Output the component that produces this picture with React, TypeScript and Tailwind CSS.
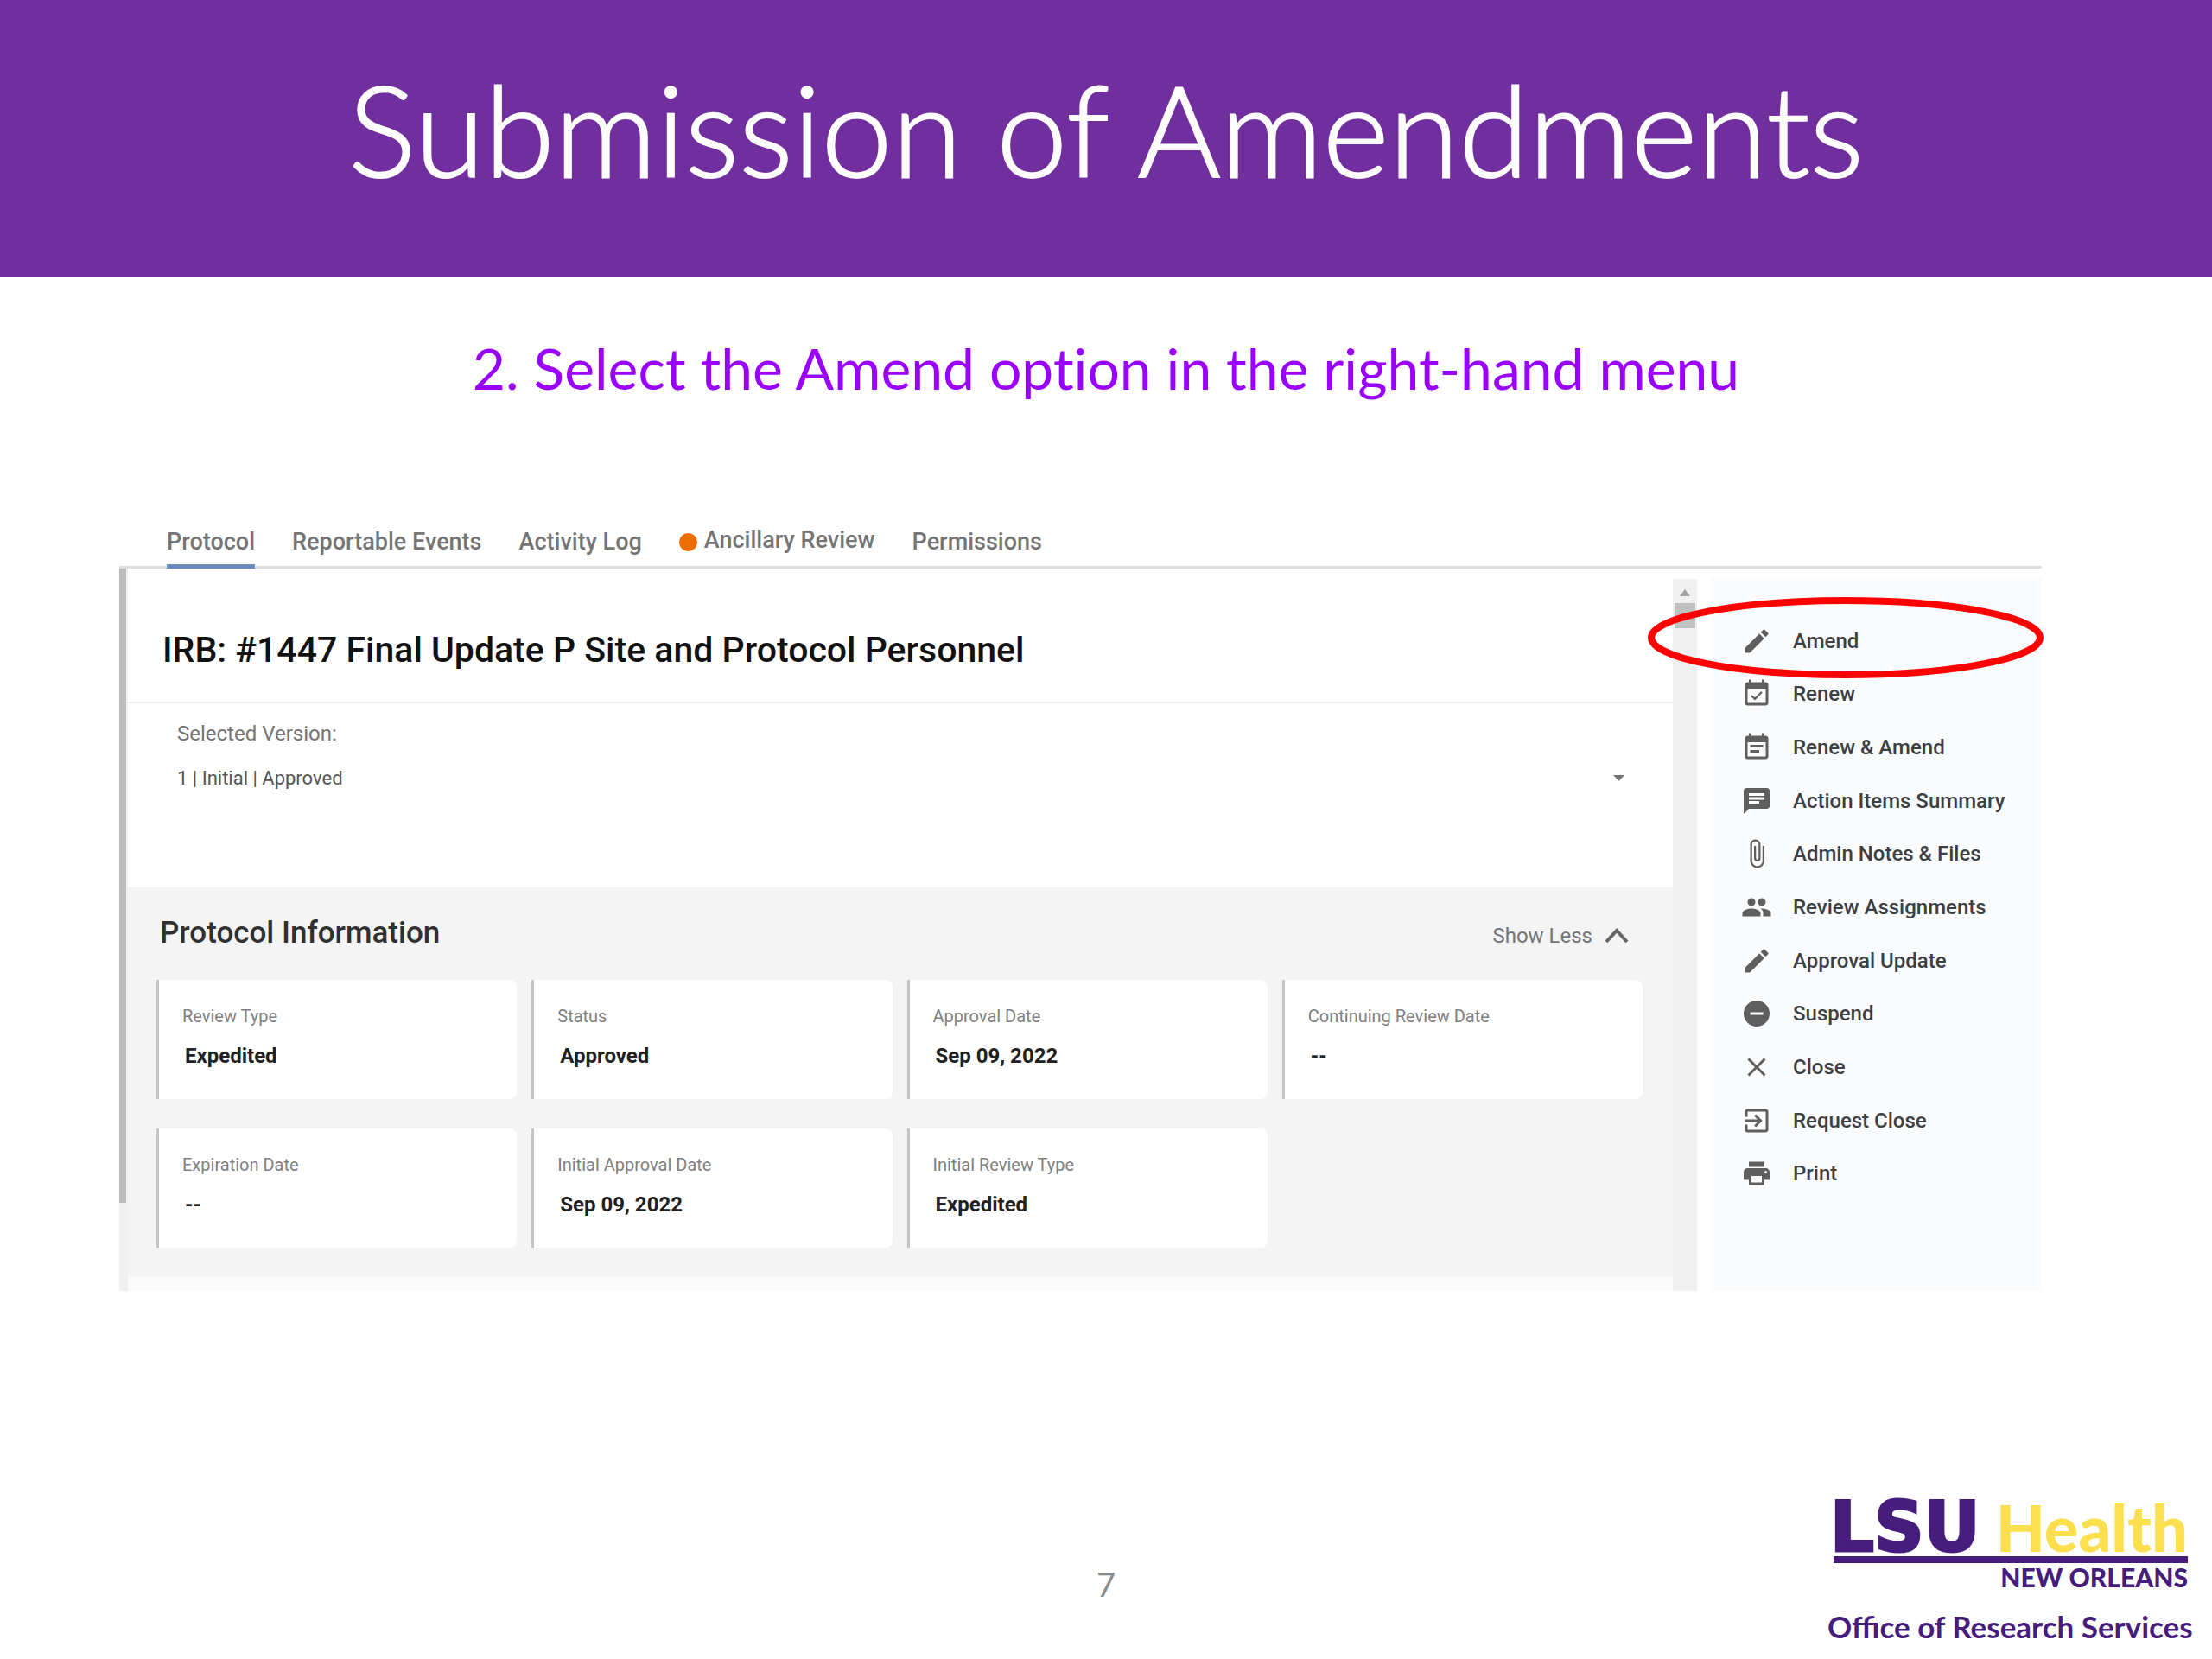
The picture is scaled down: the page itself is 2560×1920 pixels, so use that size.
import { useState } from 'react';
import type { IconType } from 'react-icons';
import {
  MdAttachFile,
  MdChat,
  MdClose,
  MdEdit,
  MdEventAvailable,
  MdEventNote,
  MdExitToApp,
  MdPeople,
  MdPrint,
  MdRemoveCircle,
} from 'react-icons/md';

interface Tab {
  label: string;
  alert?: boolean;
}

interface MenuItem {
  label: string;
  icon: IconType;
  circled?: boolean;
}

interface Field {
  label: string;
  value: string;
}

const TABS: Tab[] = [
  { label: 'Protocol' },
  { label: 'Reportable Events' },
  { label: 'Activity Log' },
  { label: 'Ancillary Review', alert: true },
  { label: 'Permissions' },
];

const MENU: MenuItem[] = [
  { label: 'Amend', icon: MdEdit, circled: true },
  { label: 'Renew', icon: MdEventAvailable },
  { label: 'Renew & Amend', icon: MdEventNote },
  { label: 'Action Items Summary', icon: MdChat },
  { label: 'Admin Notes & Files', icon: MdAttachFile },
  { label: 'Review Assignments', icon: MdPeople },
  { label: 'Approval Update', icon: MdEdit },
  { label: 'Suspend', icon: MdRemoveCircle },
  { label: 'Close', icon: MdClose },
  { label: 'Request Close', icon: MdExitToApp },
  { label: 'Print', icon: MdPrint },
];

const FIELDS: Field[] = [
  { label: 'Review Type', value: 'Expedited' },
  { label: 'Status', value: 'Approved' },
  { label: 'Approval Date', value: 'Sep 09, 2022' },
  { label: 'Continuing Review Date', value: '--' },
  { label: 'Expiration Date', value: '--' },
  { label: 'Initial Approval Date', value: 'Sep 09, 2022' },
  { label: 'Initial Review Type', value: 'Expedited' },
];

function TabBar({ active, onSelect }: { active: string; onSelect: (label: string) => void }) {
  return (
    <nav className="flex gap-[43px] border-b-3 border-[#dedede] pl-[55px]">
      {TABS.map((t) => (
        <button
          key={t.label}
          onClick={() => onSelect(t.label)}
          className={`-mb-[3px] flex h-14 items-center gap-2 border-b-5 text-[27px] font-medium text-[#757575] ${
            t.label === active ? 'border-[#6a89bd]' : 'border-transparent'
          }`}
        >
          {t.alert && <span className="h-[21px] w-[21px] rounded-full bg-[#ef6c00]" />}
          <span className={t.alert ? 'pb-1' : ''}>{t.label}</span>
        </button>
      ))}
    </nav>
  );
}

function FieldCard({ label, value }: Field) {
  return (
    <div className="h-[138px] rounded-r-lg border-l-3 border-[#c4c4c4] bg-white pt-[26px] pl-[27px]">
      <dt className="text-xl leading-8 text-[#808080]">{label}</dt>
      <dd className="pt-3 pl-[3px] text-2xl leading-9 font-bold text-[#212121]">{value}</dd>
    </div>
  );
}

function ProtocolInfo() {
  const [expanded, setExpanded] = useState(true);

  return (
    <section className="flex-1 bg-[#f4f4f4] pr-[35px] pb-[33px] pl-[33px]">
      <div className="flex h-[107px] items-center justify-between pr-4 pl-1">
        <h3 className="text-[35px] font-medium text-[#303030]">Protocol Information</h3>
        <button
          onClick={() => setExpanded(!expanded)}
          className="flex items-center gap-[14px] pt-1 text-2xl text-[#757575]"
        >
          {expanded ? 'Show Less' : 'Show More'}
          <svg width="28" height="18" viewBox="0 0 28 18" fill="none" stroke="#666666" strokeWidth="4">
            <path d={expanded ? 'M2 16 14 3 26 16' : 'M2 2 14 15 26 2'} />
          </svg>
        </button>
      </div>
      {expanded && (
        <dl className="grid grid-cols-4 gap-x-[17px] gap-y-[34px]">
          {FIELDS.map((f) => (
            <FieldCard key={f.label} {...f} />
          ))}
        </dl>
      )}
    </section>
  );
}

function ActionMenu() {
  return (
    <div className="ml-4 w-[383px] shrink-0 bg-[#fafbfd] pt-[42px] pl-[35px]">
      <ul className="grid h-[678px] auto-rows-fr">
        {MENU.map(({ label, icon: Icon, circled }) => (
          <li key={label} className="relative flex">
            <button className="flex items-center gap-6 text-2xl font-medium whitespace-nowrap text-[#3c4043]">
              <Icon size={36} className="text-[#5f5f5f]" />
              {label}
            </button>
            {circled && (
              <svg
                className="pointer-events-none absolute -top-5 -left-[108px]"
                width="458"
                height="96"
                viewBox="0 0 458 96"
                fill="none"
              >
                <ellipse cx="229" cy="47" rx="225" ry="43" stroke="#ff0000" strokeWidth="8" />
              </svg>
            )}
          </li>
        ))}
      </ul>
    </div>
  );
}

function Logo() {
  return (
    <div className="w-[421px] font-[Lato,sans-serif] text-[#461d7c]">
      <div className="mr-1 ml-[7px] flex items-end justify-between border-b-8 border-[#461d7c] pb-[3px]">
        <span className="-ml-1 font-['DejaVu_Sans',sans-serif] text-[80px] leading-[60px] font-bold [-webkit-text-stroke:3px_#461d7c]">
          LSU
        </span>
        <span className="text-[74px] leading-[60px] font-black text-[#fbdf4e]">Health</span>
      </div>
      <div className="mr-1 pt-px text-right text-[30px] leading-[30px] font-black">NEW ORLEANS</div>
      <div className="pt-[22px] text-[35px] leading-10 font-bold whitespace-nowrap">
        Office of Research Services
      </div>
    </div>
  );
}

export default function App() {
  const [tab, setTab] = useState('Protocol');

  return (
    <div className="flex min-h-screen flex-col bg-white font-[Roboto,sans-serif]">
      <header className="flex h-80 items-center justify-center bg-[#702e9f] pb-6">
        <h1 className="font-[Lato,sans-serif] text-[147px] leading-none font-light text-white [-webkit-text-stroke:2px_white]">
          Submission of Amendments
        </h1>
      </header>

      <h2 className="pt-16 text-center font-[Lato,sans-serif] text-[66px] leading-[84px] text-[#9900ff] [font-variant-ligatures:none]">
        2. Select the Amend option in the right-hand menu
      </h2>

      <main className="mt-[134px] mr-[197px] ml-[138px]">
        <TabBar active={tab} onSelect={setTab} />

        <div className="flex h-[836px]">
          <div className="w-[10px] bg-[#f0f0f0]">
            <div className="h-[734px] w-2 bg-[#bdbdbd]" />
          </div>

          <div className="flex min-w-0 flex-1 flex-col">
            <div className="flex h-[156px] items-center border-b-2 border-[#eeeeee] pt-9 pl-10">
              <h2 className="text-[41px] font-medium text-[#111111]">
                IRB: #1447 Final Update P Site and Protocol Personnel
              </h2>
            </div>

            <div className="h-[214px] pt-[15px] pr-14 pl-[57px]">
              <label htmlFor="version" className="block text-2xl leading-10 text-[#757575]">
                Selected Version:
              </label>
              <div className="flex items-center pt-3">
                <select id="version" className="h-10 flex-1 appearance-none text-[22px] text-[#555555]">
                  <option>1 | Initial | Approved</option>
                </select>
                <svg width="13" height="7" viewBox="0 0 13 7" fill="#757575">
                  <path d="M0 0H13L6.500 7Z" />
                </svg>
              </div>
            </div>

            <ProtocolInfo />
            <div className="h-[17px] bg-[#fafafa]" />
          </div>

          <div className="mt-3 flex w-7 flex-col items-center bg-[#f0f0f0] pt-3">
            <svg width="12" height="8" viewBox="0 0 12 8" fill="#a3a3a3">
              <path d="M6 0 12 8H0Z" />
            </svg>
            <div className="mt-2 h-[29px] w-6 bg-[#c1c1c1]" />
          </div>

          <div className="flex pt-[11px]">
            <ActionMenu />
          </div>
        </div>
      </main>

      <footer className="mt-auto grid grid-cols-3 items-end pr-6 pb-[18px]">
        <span className="col-start-2 pb-[43px] pl-6 text-center font-[Lato,sans-serif] text-[38px] leading-[52px] text-[#8b8b8b]">
          7
        </span>
        <div className="justify-self-end">
          <Logo />
        </div>
      </footer>
    </div>
  );
}
